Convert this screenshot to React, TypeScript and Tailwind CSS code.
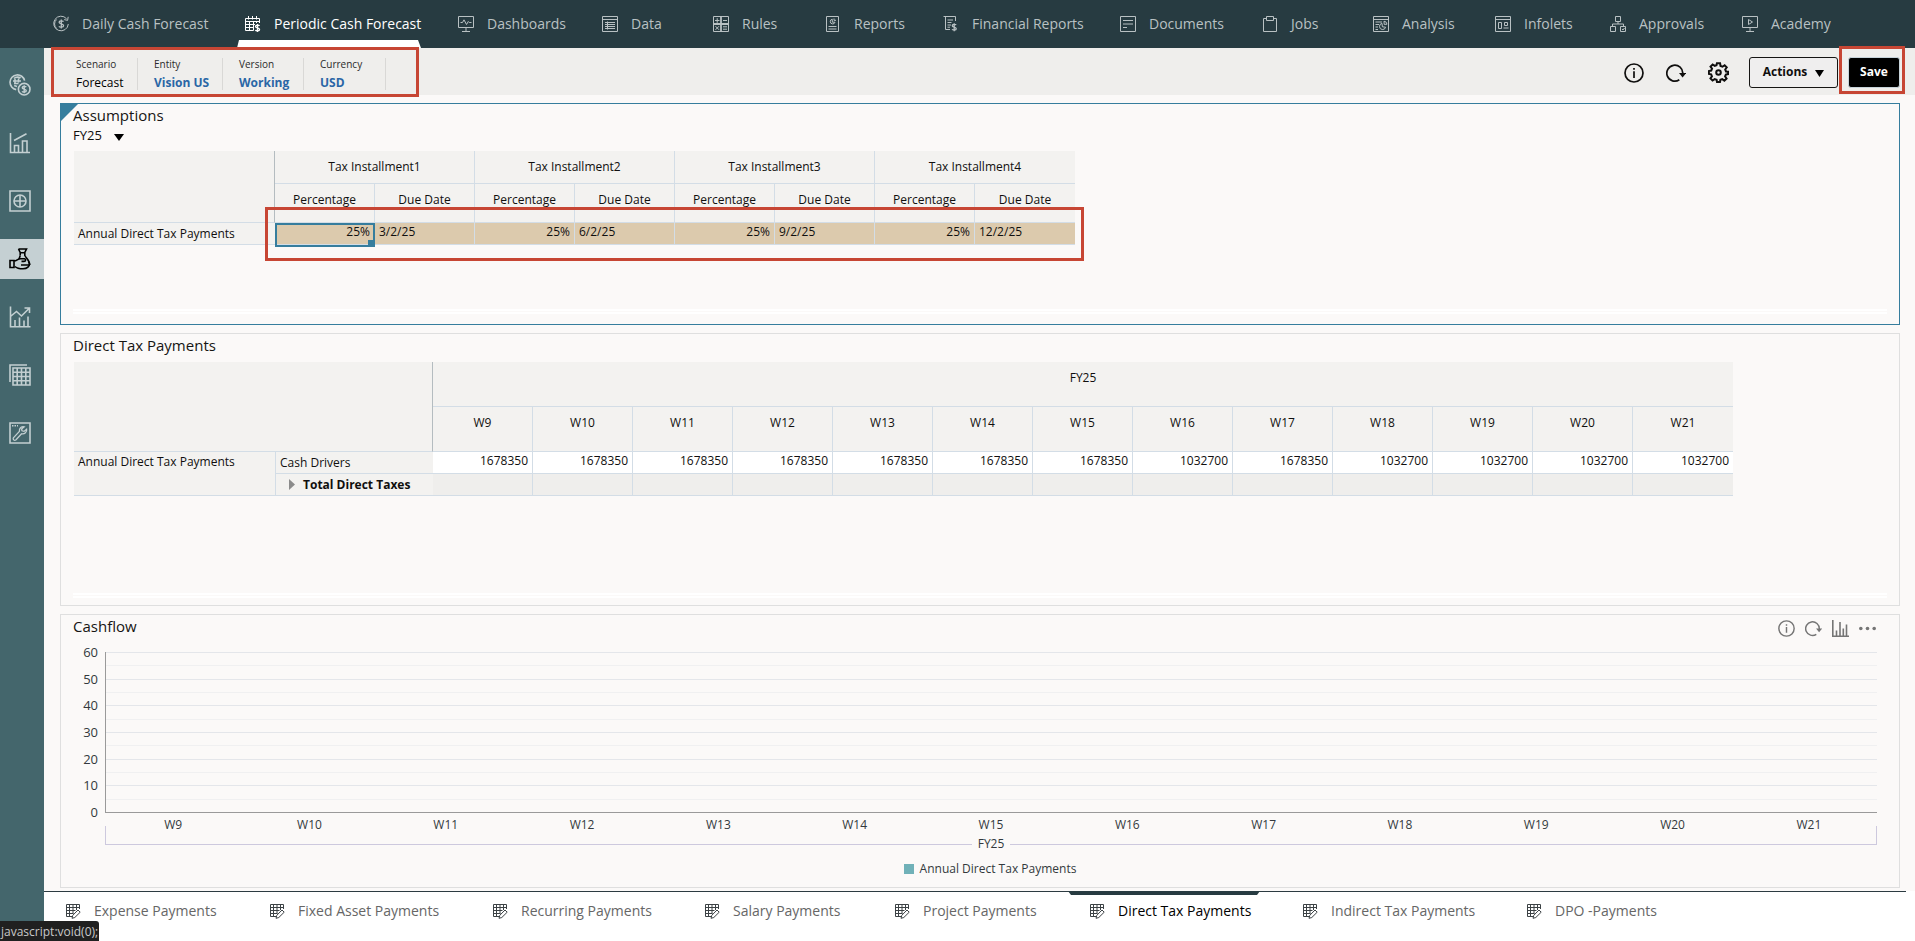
import type { ReactNode } from 'react';

type IconProps = { children: ReactNode; className?: string; box?: number; sw?: number };

function Icon({ children, className = 'size-[18px]', box = 18, sw = 1 }: IconProps) {
  return (
    <svg
      className={`shrink-0 ${className}`}
      viewBox={`0 0 ${box} ${box}`}
      fill="none"
      stroke="currentColor"
      strokeWidth={sw}
      aria-hidden="true"
    >
      {children}
    </svg>
  );
}

const dollar = 'M2.2 -2.4C1.6 -3.4 -2.2 -3.6 -2.2 -1.7C-2.2 .2 2.3 -.3 2.3 1.7C2.3 3.6 -1.7 3.4 -2.4 2.3M0 -4.4V4.4';

const navItems: { label: string; width: string; icon: ReactNode; active?: boolean }[] = [
  {
    label: 'Daily Cash Forecast',
    width: 'w-[192px]',
    icon: (
      <>
        <path d="M14.6 3.8A7.3 7.3 0 1 0 16.3 9M16.2 1.8L15.6 5.4L12.2 4.6M4.6 4.5A6 6 0 0 0 4.6 13.5" />
        <path d={dollar} transform="translate(9.3 9)" strokeWidth="1.3" />
      </>
    ),
  },
  {
    label: 'Periodic Cash Forecast',
    width: 'w-[213px]',
    active: true,
    icon: (
      <>
        <path d="M9.5 15.5H1.5V3.5H15.5V8M1.5 6.5H15.5M5.5 6.5V15.5M9.5 6.5V15.5M1.5 9.5H11M1.5 12.5H10M12.5 6.5V8M4.5 1V4.5M8.5 1V4.5M12.5 1V4.5" />
        <path d={dollar} transform="translate(13.5 13) scale(.9)" strokeWidth="1.5" />
      </>
    ),
  },
  {
    label: 'Dashboards',
    width: 'w-[144px]',
    icon: <path d="M1.5 1.5H16.5V12.5H1.5ZM9 12.5V16.5M5 16.5H13M3.5 7.5H5.5L7 4.8L9.5 9.5L11.3 6.5L12.3 7.5H14.5" />,
  },
  {
    label: 'Data',
    width: 'w-[111px]',
    icon: <path d="M1.5 1.5H16.5V16.5H1.5ZM1.5 4.5H16.5M4 7.5H14M4 9.5H14M4 11.5H14M4 13.5H14M6.5 6.5V14.5" />,
  },
  {
    label: 'Rules',
    width: 'w-[112px]',
    icon: (
      <>
        <path d="M1.5 1.5H16.5V16.5H1.5Z" />
        <path d="M9 1.5V16.5M1.5 9H16.5" strokeWidth="1.8" />
        <path d="M3 5.5H7.5M5.2 3.2V7.8M11 5.5H15M3.5 11.2L7 14.8M7 11.2L3.5 14.8M11 11.8H15M11 14.2H15" />
      </>
    ),
  },
  {
    label: 'Reports',
    width: 'w-[118px]',
    icon: (
      <>
        <path d="M2.5 1.5H14.5V16.5H2.5ZM4.5 11.5H12.5M4.5 14H12.5" />
        <path d="M8.2 4.2A2.4 2.4 0 1 0 11 7.2H8.4ZM10 3.5V5.3H12" />
      </>
    ),
  },
  {
    label: 'Financial Reports',
    width: 'w-[177px]',
    icon: (
      <>
        <path d="M8 14.5H3.5V1.5H13.5V6M1.5 1.5H4M5.5 5H11M5.5 7.5H9.5M5.5 10H9M5.5 12.2H8" />
        <path d={dollar} transform="translate(12.2 12.2) scale(.9)" strokeWidth="1.4" />
      </>
    ),
  },
  {
    label: 'Documents',
    width: 'w-[142px]',
    icon: <path d="M1.5 1.5H16.5V16.5H1.5ZM4 5.5H14M4 9H14M4 12.5H8" />,
  },
  {
    label: 'Jobs',
    width: 'w-[111px]',
    icon: <path d="M5.5 3.5H2.5V16.5H15.5V3.5H12.5M5.5 1.5H12.5V5.5H5.5Z" />,
  },
  {
    label: 'Analysis',
    width: 'w-[122px]',
    icon: (
      <>
        <path d="M1.5 1.5H16.5V16.5H1.5ZM1.5 4.5H16.5M3.5 7H10M3.5 9.5H7M3.5 12H6M3.5 14.5H6" />
        <path d="M10 8.4A3.1 3.1 0 1 0 13.6 12.2L10.4 11.8ZM12 6.2A3.4 3.4 0 0 1 15 9.2L12.2 9.4Z" />
      </>
    ),
  },
  {
    label: 'Infolets',
    width: 'w-[115px]',
    icon: <path d="M1.5 1.5H16.5V16.5H1.5ZM1.5 4.5H16.5M4.5 7.5H7.5V13.5H4.5ZM10.5 7.5H13.5V10.5H10.5ZM9.5 13H14.5" />,
  },
  {
    label: 'Approvals',
    width: 'w-[132px]',
    icon: (
      <>
        <path d="M6.5 1.5H11.5V6.5H6.5ZM9 6.5V9M3.5 11V9H14.5V11M1.5 11.5H6.5V16.5H1.5ZM11.5 11.5H16.5V16.5H11.5Z" />
        <path d="M13 14L14 15L15.5 13" />
      </>
    ),
  },
  {
    label: 'Academy',
    width: 'w-[110px]',
    icon: <path d="M1.5 1.5H16.5V12.5H1.5ZM9 12.5V16.5M5 16.5H13M7.5 4.5L11.5 7L7.5 9.5Z" />,
  },
];

const sideItems: { label: string; icon: ReactNode; active?: boolean }[] = [
  {
    label: 'Cash overview',
    icon: (
      <>
        <path d="M15.6 6.6A7.4 7.4 0 1 0 7.2 15.6" />
        <path d="M5 4.5C7 2.5 10 2.8 11.5 4.2M4 7H12M5 9.5H9.5M5.2 11.5L8 12.5M6 5V9M9.5 4.5V8.5" strokeWidth="1.6" />
        <circle cx="15.2" cy="15.2" r="5.8" />
        <path d={dollar} transform="translate(15.2 15.2) scale(.9)" />
      </>
    ),
  },
  {
    label: 'Trends',
    icon: <path d="M1.5 1V20.5H21M5.5 20V13.5H9.5V20M13.5 20V9H18V20M5 8.5L17.5 1.8" />,
  },
  {
    label: 'Add',
    icon: (
      <>
        <path d="M1 1H21V21H1ZM11 5V17M5 11H17" />
        <circle cx="11" cy="11" r="6" />
      </>
    ),
  },
  {
    label: 'Payments',
    active: true,
    icon: (
      <>
        <path d="M9.5 1H17.5L15.8 4.5V7.5C17 9.8 20.5 12.5 20.5 15.8C20.5 18 18.5 20.8 14 20.8C10 20.8 7 19.5 6 18.5M11.2 7.5V4.5L9.5 1M10.5 4.8H16.5M10 11L11.2 7.8" />
        <path d="M1 12.5H5V19.5H1ZM5 13C8 13 8.5 10.8 11.5 10.8H15.5C17 11 17 13.4 15 13.4H12.5M12 17H21M19.5 13.5L21 17" />
      </>
    ),
  },
  {
    label: 'Growth',
    icon: <path d="M1.5 .5V20.8H21.5M6 20V14M10.5 20V11.5M15 20V14.5M19 20V10.5M2 10L7.5 5.5L12.5 10L20 2.5M15.5 2H20.5V7" />,
  },
  {
    label: 'Grids',
    icon: (
      <>
        <path d="M1 18V1H18" />
        <path d="M4 4H21V21H4Z" />
        <path d="M8.2 4V21M12.5 4V21M16.8 4V21M4 8.2H21M4 12.5H21M4 16.8H21" />
      </>
    ),
  },
  {
    label: 'Tools',
    icon: (
      <>
        <path d="M1 1H21V21H1Z" />
        <path d="M3 3.8H9" strokeDasharray="1.5 1" />
        <path d="M17.6 7.2L15 9.4L13 8.8L12.6 7L15.2 4.8C12.8 4.2 10 6 10.4 9.4L4.4 15.8C3.6 17.4 5.2 19 6.8 18L12.6 11.8C15.6 12.4 18.2 10.2 17.6 7.2Z" strokeWidth="1.3" />
      </>
    ),
  },
];

const pov = [
  { label: 'Scenario', value: 'Forecast', width: 'w-[78px]', link: false },
  { label: 'Entity', value: 'Vision US', width: 'w-[85px]', link: true },
  { label: 'Version', value: 'Working', width: 'w-[81px]', link: true },
  { label: 'Currency', value: 'USD', width: 'w-[82px]', link: true },
];

const installments = [
  { name: 'Tax Installment1', pct: '25%', due: '3/2/25' },
  { name: 'Tax Installment2', pct: '25%', due: '6/2/25' },
  { name: 'Tax Installment3', pct: '25%', due: '9/2/25' },
  { name: 'Tax Installment4', pct: '25%', due: '12/2/25' },
];

const weeks = [
  { week: 'W9', amount: '1678350' },
  { week: 'W10', amount: '1678350' },
  { week: 'W11', amount: '1678350' },
  { week: 'W12', amount: '1678350' },
  { week: 'W13', amount: '1678350' },
  { week: 'W14', amount: '1678350' },
  { week: 'W15', amount: '1678350' },
  { week: 'W16', amount: '1032700' },
  { week: 'W17', amount: '1678350' },
  { week: 'W18', amount: '1032700' },
  { week: 'W19', amount: '1032700' },
  { week: 'W20', amount: '1032700' },
  { week: 'W21', amount: '1032700' },
];

const bottomTabs = [
  { label: 'Expense Payments', width: 'w-[204px]' },
  { label: 'Fixed Asset Payments', width: 'w-[223px]' },
  { label: 'Recurring Payments', width: 'w-[212px]' },
  { label: 'Salary Payments', width: 'w-[190px]' },
  { label: 'Project Payments', width: 'w-[195px]' },
  { label: 'Direct Tax Payments', width: 'w-[213px]', active: true },
  { label: 'Indirect Tax Payments', width: 'w-[224px]' },
  { label: 'DPO -Payments', width: 'w-[160px]' },
];

const headCell = 'h-full border-r border-b border-[#d3dde6] bg-[#f3f2f0] px-1 pt-2 align-top font-normal';

function InfoIcon({ className }: { className: string }) {
  return (
    <Icon box={20} className={className} sw={1.7}>
      <circle cx="10" cy="10" r="9" />
      <path d="M10 8.3V15M10 5V6.8" />
    </Icon>
  );
}

function RefreshIcon({ className }: { className: string }) {
  return (
    <Icon box={20} className={className} sw={1.7}>
      <path d="M13.3 16.8A8 8 0 1 1 16.8 10.5" />
      <path d="M13 10H20.2L16.6 14.4Z" fill="currentColor" stroke="none" />
    </Icon>
  );
}

function GearIcon() {
  return (
    <Icon box={24} className="size-[21px]" sw={2.3}>
      <path d="M10.2 1.5H13.8L14.3 4.5L16.6 5.4L19 3.7L21.4 6.1L19.7 8.6L20.6 10.8L23 11V13.8L20.4 14.3L19.5 16.5L21.2 18.9L18.7 21.3L16.3 19.6L14.2 20.4L13.7 22.8H10.3L9.8 20.4L7.6 19.5L5.2 21.2L2.8 18.7L4.5 16.3L3.6 14.1L1 13.7V10.3L3.7 9.8L4.6 7.6L2.9 5.2L5.3 2.8L7.7 4.5L9.7 3.7Z" />
      <circle cx="12" cy="12" r="2.6" />
    </Icon>
  );
}

function FormIcon() {
  return (
    <Icon box={16} className="size-4 text-[#3c4245]">
      <path d="M7 13.5H1.5V1.5H14.5V6M1 4.5H14M1 7.5H10.5M1 10.5H8.5M4.5 1.5V13.5M8 1.5V10.5M11.5 1.5V7" />
      <path d="M7 15.3L7.8 12.3L13 7L15.2 9.2L9.8 14.5Z" fill="#fff" />
    </Icon>
  );
}

function TopNav() {
  return (
    <nav className="flex h-12 bg-[#273b41] pl-[52px]">
      {navItems.map((item) => (
        <a
          key={item.label}
          href="#"
          className={`relative flex h-full shrink-0 items-center gap-3 text-sm whitespace-nowrap ${item.width} ${
            item.active ? 'text-white' : 'text-[#b9c1c3]'
          }`}
        >
          <Icon>{item.icon}</Icon>
          {item.label}
          {item.active && (
            <svg className="absolute bottom-0 -left-[7px] h-2 w-[184px] text-white" viewBox="0 0 184 8" aria-hidden="true">
              <path d="M2 0H181L184 8H0Z" fill="currentColor" />
            </svg>
          )}
        </a>
      ))}
    </nav>
  );
}

function SideNav() {
  return (
    <aside className="w-11 shrink-0 bg-[#44666c] pt-[17px]">
      <ul className="flex flex-col gap-[18px]">
        {sideItems.map((item) => (
          <li key={item.label}>
            <a
              href="#"
              aria-label={item.label}
              className={`flex h-10 items-center pl-[9px] ${
                item.active ? 'bg-[#c5d0d3] text-black' : 'text-[#c3cfd1]'
              }`}
            >
              <Icon box={22} className="size-[22px]" sw={1.6}>
                {item.icon}
              </Icon>
            </a>
          </li>
        ))}
      </ul>
    </aside>
  );
}

function Toolbar() {
  return (
    <header className="relative z-10 flex h-[47px] items-start justify-between bg-[#efeeec] pr-[15px] pl-4">
      <dl className="relative flex pt-[10px]">
        {pov.map((item) => (
          <div key={item.label} className={`flex h-8 flex-col border-r border-[#d9d8d6] pl-4 ${item.width}`}>
            <dt className="text-[10px] leading-3 text-[#2b2b2b]">{item.label}</dt>
            <dd className={`pt-1 text-xs leading-[18px] whitespace-nowrap ${item.link ? 'font-bold text-[#2a66a6]' : 'text-black'}`}>
              {item.value}
            </dd>
          </div>
        ))}
        <span className="absolute -top-px -left-[9px] h-[50px] w-[368px] border-3 border-[#c74634]" />
      </dl>
      <div className="flex items-center pt-[9px]">
        <button type="button" aria-label="Information" className="mr-[22px]">
          <InfoIcon className="size-5" />
        </button>
        <button type="button" aria-label="Refresh" className="mr-[22px]">
          <RefreshIcon className="size-5" />
        </button>
        <button type="button" aria-label="Settings" className="mr-5">
          <GearIcon />
        </button>
        <button
          type="button"
          className="flex h-[31px] w-[89px] items-center justify-center gap-2 rounded-[3px] border border-[#161513] bg-[#efeeee] pb-[2px] text-xs font-bold"
        >
          Actions
          <svg className="mt-[3px] h-[7px] w-[9px]" viewBox="0 0 9 7" aria-hidden="true">
            <path d="M0 0H9L4.5 7Z" />
          </svg>
        </button>
        <div className="relative ml-[10px]">
          <button
            type="button"
            className="h-[31px] w-[52px] rounded-[3px] border border-[#c7d3da] bg-black pb-[2px] text-xs font-bold text-white"
          >
            Save
          </button>
          <span className="absolute -top-[11px] -left-[9px] h-12 w-[66px] border-3 border-[#c74634]" />
        </div>
      </div>
    </header>
  );
}

function GridFoot() {
  return <div className="mt-auto mr-3 ml-3 h-[5px] border-y-2 border-white" />;
}

function Assumptions() {
  return (
    <section className="relative flex min-h-[222px] flex-col border border-[#367d9d] pb-[10px]">
      <svg className="absolute top-0 left-0 size-[17px]" viewBox="0 0 17 17" aria-hidden="true">
        <path d="M0 0H17L0 17Z" fill="#367d9d" />
      </svg>
      <h2 className="pl-3 text-[15px] leading-[22px] text-[#161513]">Assumptions</h2>
      <div className="flex h-[25px] items-start pt-px pl-3">
        <label className="relative flex items-center text-[13px] leading-4">
          <select aria-label="Year" defaultValue="FY25" className="w-[51px] appearance-none bg-transparent">
            <option>FY25</option>
          </select>
          <svg className="pointer-events-none absolute top-[7px] right-0 h-[7px] w-[10px]" viewBox="0 0 10 7" aria-hidden="true">
            <path d="M0 0H10L5 7Z" />
          </svg>
        </label>
      </div>
      <div className="relative ml-[13px] w-[1001px]">
        <table className="w-full table-fixed border-separate border-spacing-0 text-xs leading-4">
          <colgroup>
            <col className="w-[201px]" />
            {installments.map((i) => [<col key={i.name + 'p'} />, <col key={i.name + 'd'} />])}
          </colgroup>
          <thead>
            <tr className="h-[33px]">
              <td rowSpan={2} className="border-r border-b border-r-[#b4bcc0] border-b-[#d3dde6] bg-[#f3f2f0]" />
              {installments.map((i) => (
                <th key={i.name} colSpan={2} className={`${headCell} last:border-r-0`}>
                  {i.name}
                </th>
              ))}
            </tr>
            <tr className="h-[39px]">
              {installments.map((i) => [
                <th key={i.name + 'p'} className={headCell}>
                  Percentage
                </th>,
                <th key={i.name + 'd'} className={`${headCell} last:border-r-0`}>
                  Due Date
                </th>,
              ])}
            </tr>
          </thead>
          <tbody>
            <tr className="h-[22px]">
              <th className="border-b border-[#d3dde6] bg-[#f3f2f0] pl-1 text-left font-normal">Annual Direct Tax Payments</th>
              {installments.map((i, n) => [
                <td key={i.name + 'p'} className="relative border-r border-b border-[#d3dde6] bg-[#dccaad] pr-1 pb-1 text-right">
                  {i.pct}
                  {n === 0 && (
                    <span className="absolute top-0 left-0 flex h-6 w-[100px] items-end justify-end border-2 border-[#367d9d]">
                      <span className="size-[5px] bg-[#367d9d]" />
                    </span>
                  )}
                </td>,
                <td key={i.name + 'd'} className="border-r border-b border-[#d3dde6] bg-[#dccaad] pb-1 pl-1 last:border-r-0">
                  {i.due}
                </td>,
              ])}
            </tr>
          </tbody>
        </table>
        <span className="absolute top-14 left-[191px] h-[54px] w-[819px] border-3 border-[#c74634]" />
      </div>
      <GridFoot />
    </section>
  );
}

function DirectTaxPayments() {
  return (
    <section className="mt-2 flex min-h-[273px] flex-col border border-[#dfdfdf] pb-[7px]">
      <h2 className="h-7 pl-3 text-[15px] leading-[22px] text-[#161513]">Direct Tax Payments</h2>
      <table className="ml-[13px] w-[1659px] table-fixed border-separate border-spacing-0 text-xs leading-4">
        <colgroup>
          <col className="w-[202px]" />
          <col className="w-[157px]" />
          {weeks.map((w) => (
            <col key={w.week} />
          ))}
        </colgroup>
        <thead>
          <tr className="h-[45px]">
            <td colSpan={2} rowSpan={2} className="border-r border-b border-r-[#b4bcc0] border-b-[#d3dde6] bg-[#f3f2f0]" />
            <th colSpan={13} className={`${headCell} border-r-0`}>
              FY25
            </th>
          </tr>
          <tr className="h-[45px]">
            {weeks.map((w) => (
              <th key={w.week} className={`${headCell} last:border-r-0`}>
                {w.week}
              </th>
            ))}
          </tr>
        </thead>
        <tbody>
          <tr className="h-[22px]">
            <th rowSpan={2} className="border-r border-b border-[#d3dde6] bg-[#f3f2f0] pt-[2px] pl-1 text-left align-top font-normal">
              Annual Direct Tax Payments
            </th>
            <th className="border-b border-[#d3dde6] bg-[#f3f2f0] pl-1 text-left font-normal">Cash Drivers</th>
            {weeks.map((w) => (
              <td key={w.week} className="border-r border-b border-[#d3dde6] bg-white pr-1 pb-1 text-right last:border-r-0">
                {w.amount}
              </td>
            ))}
          </tr>
          <tr className="h-[22px]">
            <th className="border-b border-[#d3dde6] bg-[#f3f2f0] pl-[13px] text-left font-bold">
              <span className="flex items-center gap-2">
                <svg className="h-[11px] w-[6px] text-[#8b8b8b]" viewBox="0 0 6 11" aria-hidden="true">
                  <path d="M0 0L6 5.5L0 11Z" fill="currentColor" />
                </svg>
                Total Direct Taxes
              </span>
            </th>
            {weeks.map((w) => (
              <td key={w.week} className="border-r border-b border-[#d3dde6] bg-[#efeeec] last:border-r-0" />
            ))}
          </tr>
        </tbody>
      </table>
      <GridFoot />
    </section>
  );
}

function Cashflow() {
  return (
    <section className="mt-2 flex flex-1 flex-col border border-[#dfdfdf]">
      <div className="flex items-start justify-between pr-[23px] pl-3">
        <h2 className="h-[29px] text-[15px] leading-[22px] text-[#161513]">Cashflow</h2>
        <div className="flex h-[27px] items-center gap-[10px] text-[#757575]">
          <button type="button" aria-label="Information">
            <InfoIcon className="size-[17px]" />
          </button>
          <button type="button" aria-label="Refresh">
            <RefreshIcon className="size-[17px]" />
          </button>
          <button type="button" aria-label="Chart type">
            <Icon box={17} className="size-[17px]" sw={1.6}>
              <path d="M.8 0V16.2H17M4.5 15.5V10.5M8 15.5V2M11.3 15.5V8.5M14.5 15.5V4.5" />
            </Icon>
          </button>
          <button type="button" aria-label="More">
            <Icon box={17} className="size-[17px]" sw={0}>
              <circle cx="1.8" cy="8.5" r="1.8" fill="currentColor" />
              <circle cx="8.5" cy="8.5" r="1.8" fill="currentColor" />
              <circle cx="15.2" cy="8.5" r="1.8" fill="currentColor" />
            </Icon>
          </button>
        </div>
      </div>
      <div className="flex pr-[22px] pl-3 text-xs text-[#33393d]">
        <div className="flex h-[176px] w-[25px] flex-col justify-between text-right text-[13px] leading-4">
          {[60, 50, 40, 30, 20, 10, 0].map((v) => (
            <span key={v}>{v}</span>
          ))}
        </div>
        <div className="min-w-0 flex-1 pt-2 pl-[7px]">
          <div className="flex h-[161px] flex-col border-b border-l border-[#9a9a9a]">
            {[6, 5, 4, 3, 2, 1].map((band) => (
              <div key={band} className="flex flex-1 flex-col border-t border-[#e4e6ea]">
                <div className="flex-1" />
                <div className="flex-1 border-t border-[#f0f0f1]" />
              </div>
            ))}
          </div>
          <div className="relative h-8">
            <div className="grid grid-cols-[repeat(13,minmax(0,1fr))] pt-1 text-center leading-4">
              {weeks.map((w) => (
                <span key={w.week}>{w.week}</span>
              ))}
            </div>
            <div className="absolute inset-x-0 bottom-0 h-[19px] border-x border-b border-[#cdc9de]" />
          </div>
          <div className="relative -mt-[9px] flex justify-center">
            <span className="bg-[#fbf9f8] px-[6px] leading-4">FY25</span>
          </div>
        </div>
      </div>
      <div className="flex items-center justify-center gap-[6px] pt-[9px] pl-5 text-xs leading-4 text-[#33393d]">
        <span className="size-[10px] bg-[#70b1b8]" />
        Annual Direct Tax Payments
      </div>
    </section>
  );
}

function BottomTabs() {
  return (
    <footer className="h-[50px] bg-white pr-[9px]">
      <nav className="flex border-t border-[#2c3b41] pl-[21px]">
        {bottomTabs.map((tab) => (
          <a
            key={tab.label}
            href="#"
            className={`relative flex h-[37px] shrink-0 items-center gap-[13px] text-sm whitespace-nowrap ${tab.width} ${
              tab.active ? 'text-black' : 'text-[#666]'
            }`}
          >
            <FormIcon />
            {tab.label}
            {tab.active && (
              <svg className="absolute -top-px -left-[21px] h-1 w-[192px] text-[#273b41]" viewBox="0 0 192 4" aria-hidden="true">
                <path d="M0 0H192L189 4H3Z" fill="currentColor" />
              </svg>
            )}
          </a>
        ))}
      </nav>
    </footer>
  );
}

export default function App() {
  return (
    <div className="relative flex min-h-screen flex-col overflow-hidden bg-[#fbf9f8] font-['Open_Sans','Noto_Sans',sans-serif] text-[#100f0e]">
      <TopNav />
      <div className="flex flex-1">
        <SideNav />
        <div className="flex min-w-0 flex-1 flex-col">
          <Toolbar />
          <main className="flex flex-1 flex-col pt-2 pr-[15px] pb-[3px] pl-4">
            <Assumptions />
            <DirectTaxPayments />
            <Cashflow />
          </main>
          <BottomTabs />
        </div>
      </div>
      <div className="absolute bottom-0 left-0 h-5 w-[99px] rounded-tr-[3px] bg-[#202020] pl-px text-xs leading-[22px] text-[#c9c9c9]">
        javascript:void(0);
      </div>
    </div>
  );
}
